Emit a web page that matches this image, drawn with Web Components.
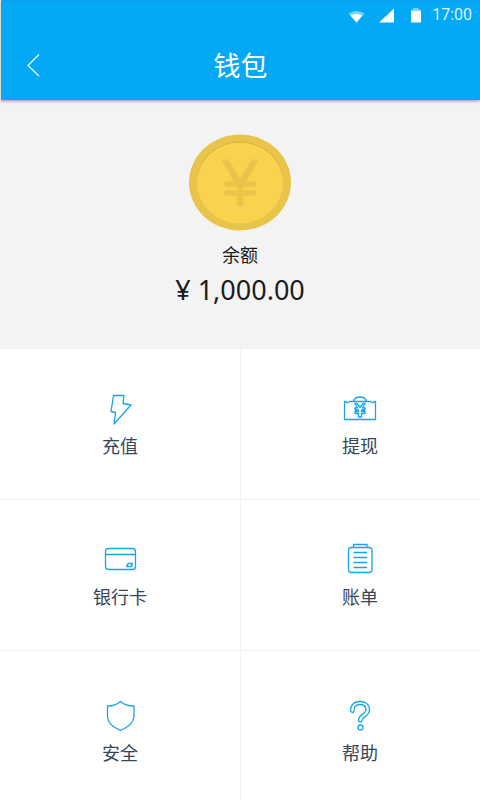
<!DOCTYPE html>
<html lang="zh-CN">
<head>
<meta charset="utf-8">
<meta name="viewport" content="width=device-width, initial-scale=1">
<title>钱包</title>
<style>
html, body { margin: 0; background: #fff; }
body { font-family: "Noto Sans", "Noto Sans CJK SC", sans-serif; }
</style>
</head>
<body>
<wallet-page>
  <wallet-status-bar slot="top">17:00</wallet-status-bar>
  <wallet-title-bar slot="top">钱包</wallet-title-bar>
  <wallet-balance><span slot="label">余额</span><span slot="amount">¥ 1,000.00</span></wallet-balance>
  <wallet-menu>
    <wallet-tile icon="bolt">充值</wallet-tile>
    <wallet-tile icon="bag">提现</wallet-tile>
    <wallet-tile icon="card">银行卡</wallet-tile>
    <wallet-tile icon="bill">账单</wallet-tile>
    <wallet-tile icon="shield">安全</wallet-tile>
    <wallet-tile icon="help">帮助</wallet-tile>
  </wallet-menu>
</wallet-page>
<script>
const define = (name, html) => customElements.define(name, class extends HTMLElement {
  constructor() {
    super();
    this.attachShadow({ mode: 'open' }).innerHTML = html;
  }
});

define('wallet-page', `
<style>
:host { display: flex; flex-direction: column; min-height: 100vh; }
header { position: relative; background: #03a9f5; color: #fff; margin: 0 0 0 1px; box-shadow: 0 1px 3px rgba(0,0,0,.4); border-top: 1px solid #0a9fe6; }
main { display: flex; flex-direction: column; flex: 1; }
</style>
<header><slot name="top"></slot></header>
<main><slot></slot></main>`);

define('wallet-status-bar', `
<style>
:host { display: flex; justify-content: flex-end; align-items: center; height: 28px; padding-right: 8px; font: 16px/28px Roboto, sans-serif; color: #d9f2fe; }
svg { display: block; margin-right: 8px; }
</style>
<svg width="76" height="18" viewBox="348 5 76 18" aria-hidden="true">
  <path d="M348.500 14.500Q356.500 9.500 364.500 14.500L356.500 23.500Z" transform="translate(0 -2)" fill="#7dd3fb"/>
  <path d="M350.500 16.500Q356.500 13.500 362.500 16.500L356.500 23.500Z" transform="translate(0 -2)" fill="#fff"/>
  <path d="M379 21.500 394 7.500V21.500Z" fill="#fff"/>
  <path d="M411 10V8.500H413V7H418.500V8.500H421V10Z" fill="#7dd3fb"/>
  <rect x="411" y="10" width="10" height="11.500" rx="1" fill="#fff"/>
</svg>
<slot></slot>`);

define('wallet-title-bar', `
<style>
:host { display: grid; grid-template-columns: 64px 1fr 64px; align-items: center; height: 71px; }
button { width: 64px; height: 64px; padding: 0; border: 0; background: none; color: inherit; cursor: pointer; }
svg { display: block; margin: auto; }
h1 { margin: 0; text-align: center; font: 27px/40px "Noto Sans CJK SC", sans-serif; }
</style>
<button type="button" aria-label="返回"><svg width="14" height="24" viewBox="0 0 14 24" fill="none" stroke="#d9f2fe" stroke-width="1.500"><path d="M13 1.500 2 12.500 13 23"/></svg></button>
<h1><slot></slot></h1>`);

define('wallet-balance', `
<style>
:host { display: flex; flex-direction: column; align-items: center; box-sizing: border-box; height: 249px; padding-top: 34px; background: #f3f3f3; color: #1c1c1c; }
svg { display: block; }
.label { margin-top: 9px; font: 18px/28px "Noto Sans CJK SC", sans-serif; }
.amount { margin-top: 2px; font: 27px/40px "Noto Sans", sans-serif; }
</style>
<svg width="102" height="97" viewBox="0 0 102 97">
  <ellipse cx="51" cy="48.500" rx="51" ry="48" fill="#e9c44a"/>
  <ellipse cx="51" cy="48" rx="43" ry="40.500" fill="#d8b23f"/>
  <ellipse cx="51" cy="49" rx="43" ry="40.500" fill="#f9d24e"/>
  <text x="51" y="71" text-anchor="middle" font-family="Liberation Sans, sans-serif" font-size="65" fill="#e9c44a" stroke="#e9c44a" stroke-width="1">¥</text>
</svg>
<div class="label"><slot name="label"></slot></div>
<div class="amount"><slot name="amount"></slot></div>`);

define('wallet-menu', `
<style>
:host { display: grid; flex: 1; grid-template-columns: 1fr 1fr; grid-template-rows: 151px 151px minmax(149px, 1fr); }
::slotted(:nth-child(even)) { box-shadow: inset 1px 0 #f3f3f3; }
::slotted(:nth-child(-n+4)) { border-bottom: 1px solid #f0f0f0; }
::slotted(:nth-child(n+5)) { --tile-top: 47px; }
</style>
<slot></slot>`);

const icons = {
  bolt: '<path d="M11.500 4.500H22L21 12.500 29 14 12 33 13.500 21.500 9 20.500Z"/>',
  bag: '<path d="M2.500 10.500V28.500H33.500V10.500H32.500Q31 12.500 28.500 10.500H7.500Q5 12.500 3.500 10.500ZM11.500 10.500C13 4.500 23 4.500 24.500 10.500"/><path d="M13 12.500H15L18 16.500 21 12.500H23L20.500 17H23V19H19.500V20.500H23V22.500H19.500V26H16.500V22.500H13V20.500H16.500V19H13V17H15.500Z"/>',
  card: '<rect x="3.500" y="6.500" width="30" height="21" rx="3"/><path d="M3.500 12.500H33.500M24.500 24.500 26 21.500H30.500L29.500 24.500Z"/>',
  bill: '<path d="M11.500 5.500H9.500Q6.500 5.500 6.500 8.500V27.500Q6.500 30.500 9.500 30.500H27Q30 30.500 30 27.500V8.500Q30 5.500 27 5.500H25M11.500 5.500V2.500H25V5.500ZM11.500 10.500H25M11.500 15.500H25M11.500 20.500H25M11.500 25.500H25"/>',
  shield: '<path d="M18.500 3.500Q23.500 8 32 8V19Q31 27 18.500 32.500 6 27 5.500 19V8Q13.500 8 18.500 3.500Z"/>',
  help: '<path d="M8.500 12.500C8.500 6.500 12.500 3.500 18 3.500S27.500 6.500 27.500 12C27.500 18.500 20 18.500 20 22.500Q20 24 18.500 24T16.500 22.500C16.500 16 24 16.500 24 12 24 8.500 21.500 6.500 18 6.500S12 8.500 12 12.500Q12 14.500 10.500 14.500T8.500 12.500Z"/><circle cx="18.500" cy="29.500" r="2.500"/>'
};

customElements.define('wallet-tile', class extends HTMLElement {
  constructor() {
    super();
    this.attachShadow({ mode: 'open' }).innerHTML = `
<style>
:host { display: block; }
button { display: flex; flex-direction: column; align-items: center; box-sizing: border-box; width: 100%; height: 100%; padding: var(--tile-top, 42px) 0 0; border: 0; background: none; color: #364558; font: 18px/28px "Noto Sans CJK SC", sans-serif; cursor: pointer; }
svg { display: block; margin-bottom: 4px; }
</style>
<button type="button"><svg width="36" height="36" viewBox="0 0 36 36" fill="none" stroke="#18a4e6" stroke-width="1.300" stroke-linejoin="round" aria-hidden="true">${icons[this.getAttribute('icon')]}</svg><span><slot></slot></span></button>`;
  }
});
</script>
</body>
</html>
